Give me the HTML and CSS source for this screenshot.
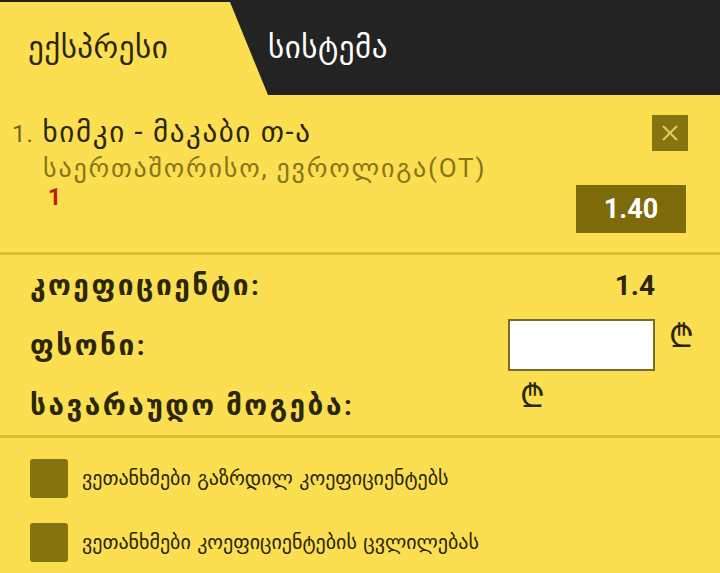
FILE: index.html
```html
<!DOCTYPE html>
<html>

<head>
    <title>Betslip</title>
    <meta name="viewport" content="width=device-width, initial-scale=1.0">
    <link rel="stylesheet" href="styles.css">
</head>

<body>
    <div class="tabs">
        <div class="tab active">ექსპრესი</div>
        <div class="tab">სისტემა</div>
    </div>

    <div class="bet">
        <div class="bet-info">
            <div class="bet-title"><span class="num">1.</span> ხიმკი - მაკაბი თ-ა</div>
            <div class="bet-league">საერთაშორისო, ევროლიგა(OT)</div>
            <div class="bet-pick">1</div>
        </div>
        <div class="bet-side">
            <button class="close-btn">
                <svg width="18" height="18" viewBox="0 0 18 18">
                    <path d="M2 2 L16 16 M16 2 L2 16" stroke="#e4cd58" stroke-width="2" />
                </svg>
            </button>
            <div class="odds">1.40</div>
        </div>
    </div>

    <div class="summary">
        <div class="row">
            <span class="label">კოეფიციენტი:</span>
            <span class="total-odds">1.4</span>
        </div>
        <div class="row">
            <span class="label">ფსონი:</span>
            <span class="stake">
                <input type="text" class="stake-input">
                <span class="lari">₾</span>
            </span>
        </div>
        <div class="row win-row">
            <span class="label">სავარაუდო მოგება:</span>
            <span class="lari win-lari">₾</span>
        </div>
    </div>

    <div class="options">
        <label class="option"><span class="check"></span>ვეთანხმები გაზრდილ კოეფიციენტებს</label>
        <label class="option"><span class="check"></span>ვეთანხმები კოეფიციენტების ცვლილებას</label>
    </div>
</body>

</html>
```

FILE: styles.css
```css
body {
    margin: 0;
    background-color: #fbdf50;
    font-family: Roboto, "DejaVu Sans", sans-serif;
    color: #2b2608;
    overflow: hidden;
}

.tabs {
    display: flex;
    height: 93px;
    background-color: #232323;
    border-top: 2px solid #232323;
}

.tab {
    display: flex;
    align-items: center;
    font-family: "DejaVu Sans", sans-serif;
    font-size: 31px;
    letter-spacing: 0.5px;
    color: #fff;
    padding-bottom: 4px;
}

.tab.active {
    width: 240px;
    padding-left: 28px;
    background-color: #fbdf50;
    color: #2b2608;
    clip-path: polygon(0 0, 230px 0, 268px 100%, 0 100%);
}

.bet {
    display: flex;
    justify-content: space-between;
    padding: 20px 34px 19px 12px;
    border-bottom: 3px solid #d9bd2c;
}

.bet-title {
    font-size: 29px;
    line-height: 34px;
    letter-spacing: 1.6px;
    color: #2b2608;
}

.num {
    font-size: 24px;
    letter-spacing: 1px;
    color: #6e6423;
}

.bet-league {
    font-size: 26px;
    line-height: 34px;
    letter-spacing: 1.8px;
    color: #857518;
    padding-left: 31px;
}

.bet-pick {
    font-size: 23px;
    line-height: 26px;
    font-weight: bold;
    color: #c4170c;
    padding-left: 36px;
}

.bet-side {
    display: flex;
    flex-direction: column;
    align-items: flex-end;
    gap: 34px;
}

.close-btn {
    display: flex;
    align-items: center;
    justify-content: center;
    width: 36px;
    height: 36px;
    margin-right: -2px;
    border: none;
    background-color: #857410;
    padding: 0;
}

.odds {
    width: 110px;
    height: 48px;
    line-height: 48px;
    text-align: center;
    background-color: #7d6b0b;
    color: #fff;
    font-size: 27px;
    font-weight: bold;
}

.summary {
    padding: 0 65px 0 30px;
    border-bottom: 3px solid #d9bd2c;
}

.row {
    display: flex;
    justify-content: space-between;
    align-items: center;
    height: 60px;
}

.label {
    font-size: 28px;
    letter-spacing: 2.5px;
    font-weight: bold;
}

.total-odds {
    font-size: 28px;
    font-weight: bold;
}

.stake {
    display: flex;
    align-items: flex-start;
    gap: 14px;
    margin-right: -37px;
}

.stake-input {
    width: 143px;
    height: 48px;
    border: 2px solid #7a6c28;
    background-color: #fff;
    padding: 0;
}

.lari {
    width: 23px;
    font-family: "DejaVu Sans", sans-serif;
    font-size: 32px;
    line-height: 34px;
    color: #2b2608;
}

.win-row {
    display: grid;
    grid-template-columns: 490px auto;
    justify-content: start;
}

.win-lari {
    margin-top: -18px;
}

.options {
    padding: 8px 30px 0;
}

.option {
    display: flex;
    align-items: center;
    gap: 14px;
    height: 64px;
    font-family: "DejaVu Sans", sans-serif;
    font-size: 20px;
}

.check {
    width: 38px;
    height: 39px;
    border-radius: 3px;
    background-color: #857410;
}
```
